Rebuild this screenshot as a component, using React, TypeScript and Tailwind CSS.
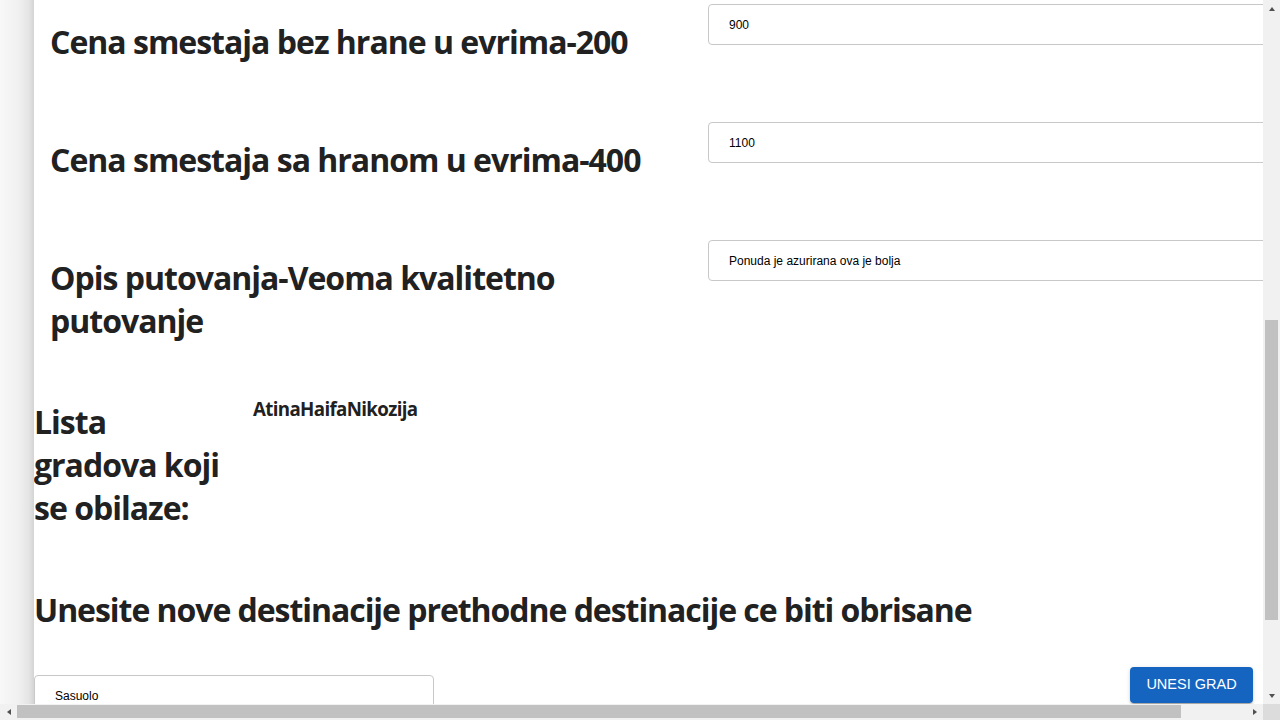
import React from 'react';

const headingFont = { fontFamily: '"Open Sans", "Noto Sans", sans-serif' };

function Arrow({ dir }: { dir: 'up' | 'down' | 'left' | 'right' }) {
    const points = {
        up: '1,6 4,2 7,6',
        down: '1,2 4,6 7,2',
        left: '6,1 2,4 6,7',
        right: '2,1 6,4 2,7',
    }[dir];
    return (
        <svg width="8" height="8" viewBox="0 0 8 8">
            <polygon points={points} fill="#505050" />
        </svg>
    );
}

function FieldRow({ label, value }: { label: string; value: string }) {
    return (
        <div className="flex items-start mb-[33px]">
            <div className="w-[674px] shrink-0 pl-4 pr-4">
                <h1
                    className="my-[21px] text-[32px] leading-[43px] font-bold text-[#212121] tracking-[-1px]"
                    style={headingFont}
                >
                    {label}
                </h1>
            </div>
            <input
                readOnly
                defaultValue={value}
                className="mt-[5px] w-[620px] shrink-0 h-[41px] rounded-[4px] border border-[#c8c8c8] pl-5 text-[12px] text-black outline-none font-['Liberation_Sans',Arial,sans-serif]"
            />
        </div>
    );
}

export default function App() {
    return (
        <div className="h-[720px] w-[1280px] flex flex-col overflow-hidden bg-white">
            <div className="flex flex-1 min-h-0">
                <div className="w-[34px] shrink-0 bg-[linear-gradient(to_right,#f8f8f8_0%,#f0f0f0_55%,#e4e4e4_85%,#d4d4d4_100%)]" />

                <main className="flex-1 min-w-0 overflow-hidden">
                    <div className="mt-[-1px]">
                        <FieldRow label="Cena smestaja bez hrane u evrima-200" value="900" />
                        <FieldRow label="Cena smestaja sa hranom u evrima-400" value="1100" />
                        <FieldRow
                            label="Opis putovanja-Veoma kvalitetno putovanje"
                            value="Ponuda je azurirana ova je bolja"
                        />
                    </div>

                    <div className="flex items-start -mt-[17px]">
                        <h1
                            className="w-[195px] shrink-0 my-[21px] text-[32px] leading-[43px] font-bold text-[#212121] tracking-[-1px]"
                            style={headingFont}
                        >
                            Lista gradova koji se obilaze:
                        </h1>
                        <h3
                            className="ml-[24px] mt-[16.7px] text-[18.72px] leading-[25px] font-bold text-[#212121] tracking-[-0.65px]"
                            style={headingFont}
                        >
                            AtinaHaifaNikozija
                        </h3>
                    </div>

                    <h1
                        className="mt-[38px] mb-[21px] text-[32px] leading-[43px] font-bold text-[#212121] tracking-[-1.05px] whitespace-nowrap"
                        style={headingFont}
                    >
                        Unesite nove destinacije prethodne destinacije ce biti obrisane
                    </h1>

                    <div className="flex items-start justify-between pr-[10px]">
                        <input
                            readOnly
                            defaultValue="Sasuolo"
                            className="mt-[23px] w-[400px] h-[41px] rounded-[4px] border border-[#c8c8c8] pl-5 text-[12px] text-black outline-none font-['Liberation_Sans',Arial,sans-serif]"
                        />
                        <button className="mt-[15px] h-9 w-[123px] rounded-[4px] bg-[#1565c0] text-white text-[14.5px] uppercase shadow-[0_3px_1px_-2px_rgba(0,0,0,0.2),0_2px_2px_0_rgba(0,0,0,0.14),0_1px_5px_0_rgba(0,0,0,0.12)] font-['Liberation_Sans',Arial,sans-serif]">
                            Unesi grad
                        </button>
                    </div>
                </main>

                {/* vertical scrollbar */}
                <div className="w-[17px] shrink-0 flex flex-col bg-[#f1f1f1]">
                    <div className="h-[17px] flex items-center justify-center">
                        <Arrow dir="up" />
                    </div>
                    <div className="flex-1 flex flex-col items-center">
                        <div className="h-[303px]" />
                        <div className="h-[300px] w-[13px] bg-[#c1c1c1]" />
                    </div>
                    <div className="h-[17px] flex items-center justify-center">
                        <Arrow dir="down" />
                    </div>
                </div>
            </div>

            {/* horizontal scrollbar */}
            <div className="h-[16px] shrink-0 flex bg-[#f1f1f1]">
                <div className="w-[17px] flex items-center justify-center">
                    <Arrow dir="left" />
                </div>
                <div className="flex-1 flex items-start">
                    <div className="mt-[1px] h-[13px] w-[1164px] bg-[#c1c1c1]" />
                </div>
                <div className="w-[17px] flex items-center justify-center">
                    <Arrow dir="right" />
                </div>
                <div className="w-[17px] bg-[#dcdcdc]" />
            </div>
        </div>
    );
}
